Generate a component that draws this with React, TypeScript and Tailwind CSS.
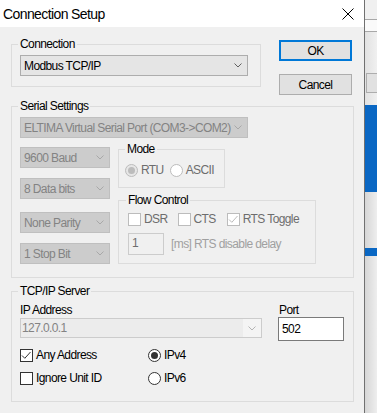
import React from 'react';

const Chevron = ({ color }: { color: string }) => (
  <svg width="8" height="5" viewBox="0 0 8 5" className="shrink-0">
    <polyline points="0.5,0.5 4,4 7.5,0.5" fill="none" stroke={color} strokeWidth="1" />
  </svg>
);

const Combo = ({ text, disabled, className }: { text: string; disabled?: boolean; className: string }) => (
  <div
    className={`flex h-[21px] items-center justify-between border pl-[3px] pr-[5px] ${
      disabled ? 'border-[#bfbfbf] bg-[#cccccc] text-[#838383]' : 'border-[#adadad] bg-[#e5e5e5] text-black'
    } ${className}`}
  >
    <span className="whitespace-nowrap">{text}</span>
    <Chevron color={disabled ? '#a8a8a8' : '#606060'} />
  </div>
);

const CheckBox = ({ checked, disabled }: { checked?: boolean; disabled?: boolean }) => (
  <span
    className={`flex h-[13px] w-[13px] shrink-0 items-center justify-center border bg-white ${
      disabled ? 'border-[#bcbcbc]' : 'border-[#333333]'
    }`}
  >
    {checked && (
      <svg width="11" height="11" viewBox="0 0 11 11">
        <polyline points="1,5.5 3.8,8.3 9.5,2" fill="none" stroke={disabled ? '#bcbcbc' : '#333333'} strokeWidth="1" />
      </svg>
    )}
  </span>
);

const Radio = ({ checked, disabled }: { checked?: boolean; disabled?: boolean }) => (
  <span
    className={`flex h-[13px] w-[13px] shrink-0 items-center justify-center rounded-full border ${
      disabled ? (checked ? 'border-[#bcbcbc] bg-[#e6e6e6]' : 'border-[#bcbcbc] bg-white') : 'border-[#333333] bg-white'
    }`}
  >
    {checked && <span className={`h-[7px] w-[7px] rounded-full ${disabled ? 'bg-[#bcbcbc]' : 'bg-[#333333]'}`} />}
  </span>
);

const Group = ({ title, className, children }: { title: string; className: string; children: React.ReactNode }) => (
  <fieldset className={`border border-[#dcdcdc] px-[6px] ${className}`}>
    <legend className="px-[2px] leading-[14px]">{title}</legend>
    <div className="px-[2px]">{children}</div>
  </fieldset>
);

const Button = ({ label, primary }: { label: string; primary?: boolean }) => (
  <div
    className={`flex h-[21px] w-[73px] items-center justify-center bg-[#e1e1e1] ${
      primary ? 'border-2 border-[#0078d7]' : 'border border-[#adadad]'
    }`}
  >
    {label}
  </div>
);

export default function App() {
  return (
    <div className="flex h-[413px] w-[377px] overflow-hidden font-['Liberation_Sans',Arial,sans-serif] text-[12px] leading-[14px] tracking-[-0.6px] text-black">
      <div className="flex w-[365px] shrink-0 flex-col border-r border-[#707070] bg-[#f0f0f0]">
        <div className="flex h-[27px] shrink-0 items-center justify-between bg-white pl-[3px] pr-[10px]">
          <span className="text-[14px] tracking-[-0.6px]">Connection Setup</span>
          <svg width="12" height="12" viewBox="0 0 12 12">
            <path d="M0.5 0.5 L11.5 11.5 M11.5 0.5 L0.5 11.5" stroke="#000" strokeWidth="1" fill="none" />
          </svg>
        </div>

        <div className="flex flex-col pl-[11px] pt-[10px]">
          <div className="flex items-start">
            <Group title="Connection" className="w-[250px] pb-[10px]">
              <Combo text="Modbus TCP/IP" className="mt-[4px] w-[228px]" />
            </Group>
            <div className="ml-[18px] mt-[3px] flex flex-col gap-[13px]">
              <Button label="OK" primary />
              <Button label="Cancel" />
            </div>
          </div>

          <Group title="Serial Settings" className="mt-[4px] w-[343px] pb-[13px]">
            <Combo text="ELTIMA Virtual Serial Port (COM3->COM2)" disabled className="mt-[4px] w-[228px]" />
            <div className="mt-[4px] flex items-start gap-[8px]">
              <div className="flex flex-col pt-[5px]">
                <Combo text="9600 Baud" disabled className="w-[90px]" />
                <Combo text="8 Data bits" disabled className="mt-[10px] w-[90px]" />
                <Combo text="None Parity" disabled className="mt-[13px] w-[90px]" />
                <Combo text="1 Stop Bit" disabled className="mt-[10px] w-[90px]" />
              </div>
              <div className="flex flex-col">
                <fieldset className="w-[107px] border border-[#dcdcdc] px-[6px] pb-[10px]">
                  <legend className="px-[2px] leading-[14px]">Mode</legend>
                  <div className="mt-[7px] flex items-center text-[#6d6d6d]">
                    <Radio checked disabled />
                    <span className="ml-[3px]">RTU</span>
                    <span className="ml-[6px]">
                      <Radio disabled />
                    </span>
                    <span className="ml-[3px]">ASCII</span>
                  </div>
                </fieldset>
                <fieldset className="mt-[5px] w-[198px] border border-[#dcdcdc] px-[7px] pb-[8px]">
                  <legend className="px-[2px] leading-[14px]">Flow Control</legend>
                  <div className="ml-[2px] mt-[5px] flex items-center text-[#6d6d6d]">
                    <CheckBox disabled />
                    <span className="ml-[3px]">DSR</span>
                    <span className="ml-[10px]">
                      <CheckBox disabled />
                    </span>
                    <span className="ml-[3px]">CTS</span>
                    <span className="ml-[11px]">
                      <CheckBox checked disabled />
                    </span>
                    <span className="ml-[3px]">RTS Toggle</span>
                  </div>
                  <div className="ml-[2px] mt-[7px] flex items-center">
                    <div className="h-[22px] w-[36px] border border-[#cccccc] bg-[#f0f0f0] pl-[3px] pt-[2px] text-[#6d6d6d]">1</div>
                    <span className="ml-[7px] text-[#a0a0a0]">[ms] RTS disable delay</span>
                  </div>
                </fieldset>
              </div>
            </div>
          </Group>

          <Group title="TCP/IP Server" className="mt-[6px] w-[343px] pb-[16px]">
            <div className="mt-[5px] flex items-start">
              <div className="flex w-[242px] flex-col">
                <span>IP Address</span>
                <div className="mt-[1px] flex h-[20px] items-center border border-[#cccccc] bg-[#f4f4f4]">
                  <div className="flex h-full flex-1 items-center bg-[#ececec] pl-[1px] text-[#838383]">127.0.0.1</div>
                  <div className="flex w-[18px] justify-center">
                    <Chevron color="#b4b4b4" />
                  </div>
                </div>
              </div>
              <div className="ml-[16px] flex flex-col">
                <span className="pl-[1px]">Port</span>
                <div className="flex h-[24px] w-[66px] items-center border border-[#7a7a7a] bg-white pl-[3px]">502</div>
              </div>
            </div>
            <div className="mt-[7px] grid grid-cols-[128px_auto] gap-y-[9px]">
              <div className="flex items-center">
                <CheckBox checked />
                <span className="ml-[3px]">Any Address</span>
              </div>
              <div className="flex items-center">
                <Radio checked />
                <span className="ml-[3px]">IPv4</span>
              </div>
              <div className="flex items-center">
                <CheckBox />
                <span className="ml-[3px]">Ignore Unit ID</span>
              </div>
              <div className="flex items-center">
                <Radio />
                <span className="ml-[3px]">IPv6</span>
              </div>
            </div>
          </Group>
        </div>
      </div>

      <div className="flex flex-1 flex-col">
        <div className="h-[19px] bg-[#f0f0f0]" />
        <div className="h-[13px] border-y border-[#a8a8a8] bg-[#fafafa]" />
        <div className="flex h-[73px] flex-col bg-gradient-to-r from-[#e2e2e2] to-[#f0f0f0] pl-[1px] pt-[41px]">
          <div className="h-[20px] border border-r-0 border-[#adadad] bg-[#e1e1e1]" />
        </div>
        <div className="h-[87px] bg-[#0a67c3]" />
        <div className="h-[56px] bg-gradient-to-r from-[#d6d6d6] to-[#eeeeee]" />
        <div className="h-[8px] bg-[#0a67c3]" />
        <div className="flex-1 bg-gradient-to-r from-[#d6d6d6] to-[#eeeeee]" />
      </div>
    </div>
  );
}
